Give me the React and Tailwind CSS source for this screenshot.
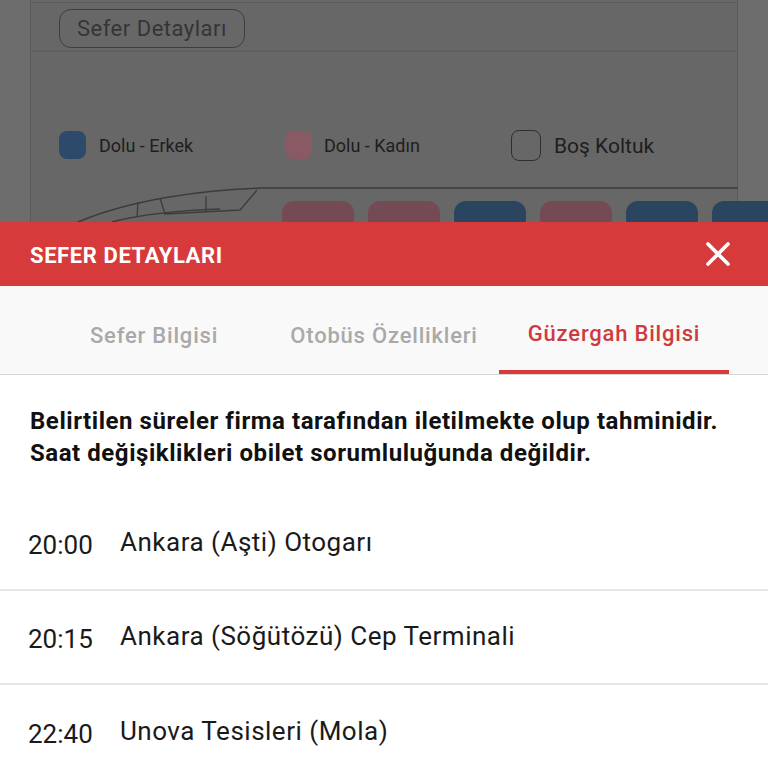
import { X } from 'lucide-react'

const SEATS = [
    { c: 'bg-[#744b54]' },
    { c: 'bg-[#744b54]' },
    { c: 'bg-[#2b4561]' },
    { c: 'bg-[#744b54]' },
    { c: 'bg-[#2b4561]' },
    { c: 'bg-[#2b4561]' },
]

const STOPS = [
    { time: '20:00', name: 'Ankara (Aşti) Otogarı' },
    { time: '20:15', name: 'Ankara (Söğütözü) Cep Terminali' },
    { time: '22:40', name: 'Unova Tesisleri (Mola)' },
]

function Backdrop() {
    return (
        <div className="relative h-[222px] bg-[#6d6d6d] overflow-hidden px-[30px] shrink-0">
            <div className="h-full bg-[#676767] border-x border-[#5c5c5c] flex flex-col">
                <div className="shrink-0 border-t border-[#5a5a5a] mt-[2px] h-[50px] border-b-2 border-b-[#606060] flex items-center pl-[28px]">
                    <div className="border border-[#3d3d3d] rounded-xl h-[39px] px-[17px] flex items-center text-[22px] tracking-[0.5px] text-[#353535] mt-[4px]">
                        Sefer Detayları
                    </div>
                </div>
                <div className="shrink-0 flex items-center pl-[28px] mt-[78px] h-[30px]">
                    <div className="w-[27px] h-[28px] rounded-lg bg-[#2d4a6a]"></div>
                    <span className="ml-[13px] text-[18px] text-[#1e1e1e] w-[186px]">Dolu - Erkek</span>
                    <div className="w-[27px] h-[28px] rounded-lg bg-[#8a5a64]"></div>
                    <span className="ml-[12px] text-[18px] text-[#1e1e1e] w-[187px]">Dolu - Kadın</span>
                    <div className="w-[30px] h-[31px] rounded-lg border border-[#2e2e2e]"></div>
                    <span className="ml-[13px] text-[21px] text-[#1e1e1e] pt-[3px]">Boş Koltuk</span>
                </div>
                <div className="shrink-0 mt-[41px]">
                    <div className="flex gap-[14px] ml-[251px]">
                        {SEATS.map((s, i) => (
                            <div key={i} className={`w-[72px] shrink-0 h-[30px] rounded-xl ${s.c}`}></div>
                        ))}
                    </div>
                </div>
            </div>
            <svg className="absolute left-0 top-0" width="768" height="222" viewBox="0 0 768 222" fill="none" stroke="#3c3c3c" strokeWidth="1.3">
                <path d="M78 222 C 130 200, 200 190, 262 188 L 738 188" strokeWidth="1.6" />
                <path d="M112 222 C 150 212, 190 210, 220 209" />
                <path d="M138 202 L 137 217" />
                <path d="M160 198 L 165 214 L 240 210 L 257 190" />
                <path d="M206 196 L 206 211" />
            </svg>
        </div>
    )
}

export default function App() {
    return (
        <div className="w-[768px] h-[768px] overflow-hidden flex flex-col bg-white" style={{ fontFamily: 'Roboto, "Noto Sans", sans-serif' }}>
            <Backdrop />
            <div className="h-[64px] bg-[#d63a3a] flex items-center justify-between px-[30px] shrink-0">
                <h1 className="text-white font-bold text-[22px] tracking-[0.6px] pt-[2px]">SEFER DETAYLARI</h1>
                <X className="text-white w-[40px] h-[40px]" strokeWidth={2.2} />
            </div>
            <div className="h-[89px] bg-[#f9f9f9] border-b border-[#d8d8d8] flex items-end shrink-0 pl-[39px]">
                <div className="w-[230px] h-full flex items-center justify-center text-[22px] tracking-[0.8px] font-medium text-[#a9a9a9] pt-[10px]">Sefer Bilgisi</div>
                <div className="w-[230px] h-full flex items-center justify-center text-[22px] tracking-[0.8px] font-medium text-[#a9a9a9] pt-[10px]">Otobüs Özellikleri</div>
                <div className="w-[230px] h-full flex flex-col items-center">
                    <div className="flex-1 flex items-center text-[22px] tracking-[0.8px] font-medium text-[#cf3a3f] pt-[10px]">Güzergah Bilgisi</div>
                    <div className="w-full h-[4px] bg-[#d63a3a]"></div>
                </div>
            </div>
            <p className="px-[30px] pt-[30px] text-[24px] font-bold leading-[32px] tracking-[0.55px] text-[#111]">
                Belirtilen süreler firma tarafından iletilmekte olup tahminidir.<br />
                Saat değişiklikleri obilet sorumluluğunda değildir.
            </p>
            <div className="mt-[28px]">
                {STOPS.map((s, i) => (
                    <div key={i} className={`h-[94px] flex items-center pl-[28px] ${i < STOPS.length - 1 ? 'border-b-2 border-[#e6e6e6]' : ''}`}>
                        <span className="w-[92px] text-[26px] text-[#1a1a1a] pt-[4px]">{s.time}</span>
                        <span className="text-[26px] tracking-[0.5px] text-[#1a1a1a] pb-[2px]">{s.name}</span>
                    </div>
                ))}
            </div>
        </div>
    )
}
